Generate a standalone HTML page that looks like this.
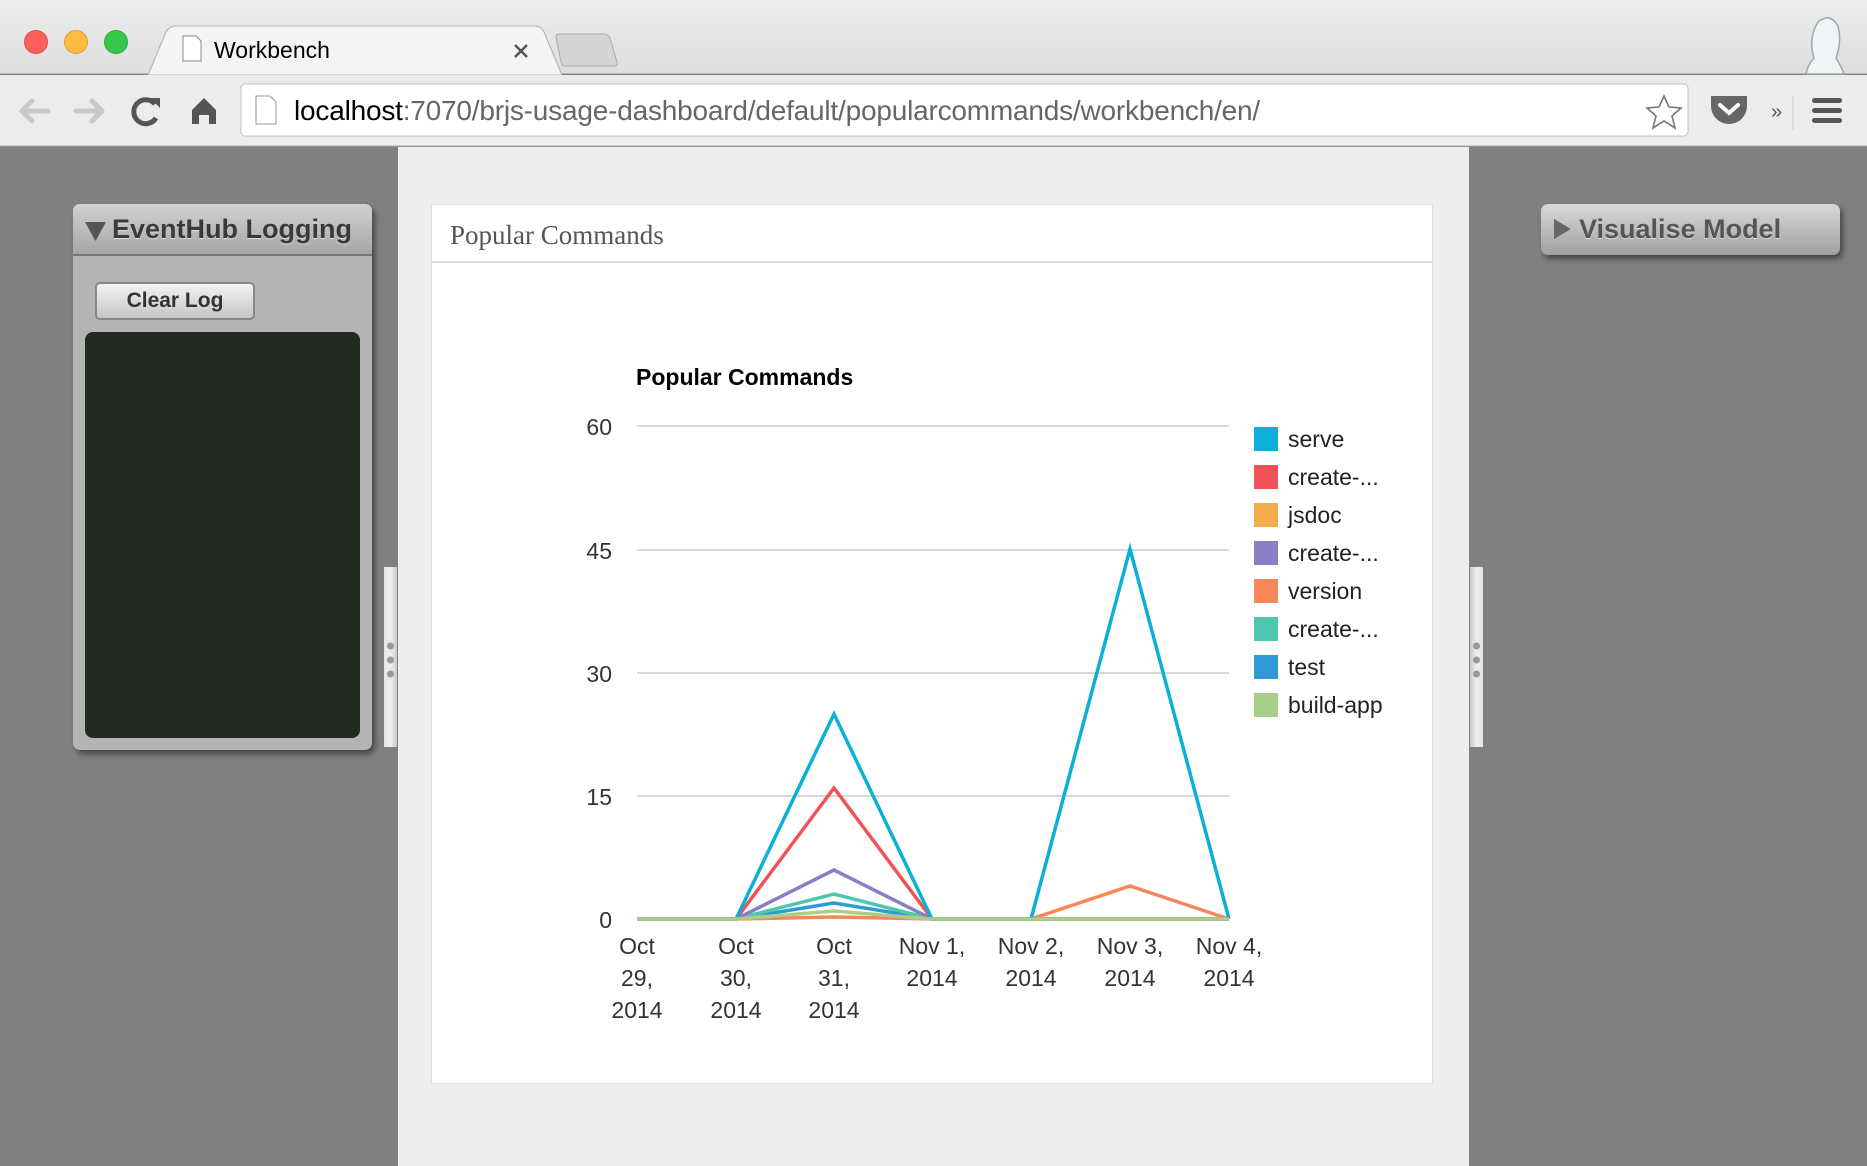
<!DOCTYPE html>
<html><head><meta charset="utf-8"><style>
*{margin:0;padding:0;box-sizing:border-box}
body{width:1867px;height:1166px;overflow:hidden;background:#808080;font-family:"Liberation Sans",sans-serif;position:relative}
.abs{position:absolute}
</style></head><body>
<div class="abs" style="left:0;top:0;width:1867px;height:74px;background:linear-gradient(#ececec,#dedede);border-bottom:1px solid #b8b8b8"></div>
<div class="abs" style="left:24px;top:30px;width:24px;height:24px;border-radius:50%;background:#fc605c;border:1px solid #de4a46"></div>
<div class="abs" style="left:64px;top:30px;width:24px;height:24px;border-radius:50%;background:#fdbc40;border:1px solid #dea034"></div>
<div class="abs" style="left:104px;top:30px;width:24px;height:24px;border-radius:50%;background:#34c84a;border:1px solid #27aa35"></div>
<svg class="abs" style="left:0;top:0" width="1867" height="148">
 <path d="M148 75 L166 32 Q169 26 176 26 L534 26 Q541 26 544 32 L562 75 Z" fill="#f4f4f4" stroke="#b0b0b0"/>
 <path d="M556 37 Q556 34 560 34 L604 34 Q608 34 610 38 L617 62 Q618 66 614 66 L566 66 Q562 66 561 62 Z" fill="#d4d4d4" stroke="#aaa"/>
 <path d="M183 36 h13 l5 5 v20 h-18 z" fill="#fff" stroke="#888"/>
 <path d="M515 45 l12 12 M527 45 l-12 12" stroke="#555" stroke-width="2.5"/>
 <rect x="0" y="75" width="1867" height="71" fill="#ececec"/>
 <line x1="0" y1="146" x2="1867" y2="146" stroke="#aaa"/>
 <path d="M22 111 h26 M22 111 l10 -10 M22 111 l10 10" stroke="#c8c8c8" stroke-width="5" fill="none" stroke-linecap="round"/>
 <path d="M102 111 h-26 M102 111 l-10 -10 M102 111 l-10 10" stroke="#c8c8c8" stroke-width="5" fill="none" stroke-linecap="round"/>
 <path d="M155 104 A12 12 0 1 0 156 118" stroke="#555" stroke-width="5" fill="none"/>
 <path d="M150 98 l10 0 l0 10 z" fill="#555"/>
 <path d="M192 110 l12 -12 l12 12 v14 h-7 v-9 h-10 v9 h-7 z" fill="#555"/>
 <rect x="241" y="84" width="1447" height="52" rx="4" fill="#fff" stroke="#c0c0c0"/>
 <path d="M256 96 h14 l6 6 v22 h-20 z" fill="#fff" stroke="#999"/>
 <path d="M1664 96 l5 11 12 1 -9 8 3 12 -11 -7 -11 7 3 -12 -9 -8 12 -1 z" fill="#fff" stroke="#777" stroke-width="1.6"/>
 <path d="M1711 96 h36 v10 a18 18 0 0 1 -36 0 z" fill="#666"/>
 <path d="M1720 105 l9 8 l9 -8" stroke="#fff" stroke-width="4" fill="none" stroke-linecap="round"/>
 <text x="1771" y="118" font-size="20" fill="#555" font-family="Liberation Sans">»</text>
 <line x1="1793" y1="96" x2="1793" y2="130" stroke="#ccc"/>
 <rect x="1812" y="98" width="30" height="5" rx="2.5" fill="#555"/><rect x="1812" y="108" width="30" height="5" rx="2.5" fill="#555"/><rect x="1812" y="118" width="30" height="5" rx="2.5" fill="#555"/>
 <path d="M1806 74 q2 -10 8 -16 q-6 -20 4 -36 q12 -10 20 4 q4 16 -2 32 q5 8 8 16 z" fill="#f0f4f8" stroke="#9aa" stroke-width="1.5"/>
</svg>
<div class="abs" style="left:214px;top:37px;font-size:23px;color:#000">Workbench</div>
<div class="abs" style="left:294px;top:95px;font-size:28px;color:#666;white-space:nowrap;letter-spacing:-0.2px"><span style="color:#000">localhost</span>:7070/brjs-usage-dashboard/default/popularcommands/workbench/en/</div>

<div class="abs" style="left:398px;top:147px;width:1071px;height:1019px;background:#eeeeee"></div>
<div class="abs" style="left:384px;top:567px;width:13px;height:180px;background:linear-gradient(90deg,#e4e4e4,#f0f0f0,#c8c8c8)"></div>
<div class="abs" style="left:1470px;top:567px;width:13px;height:180px;background:linear-gradient(90deg,#c8c8c8,#f0f0f0,#e4e4e4)"></div>
<svg class="abs" style="left:384px;top:640px" width="13" height="40"><circle cx="6.5" cy="6" r="3.5" fill="#999"/><circle cx="6.5" cy="20" r="3.5" fill="#999"/><circle cx="6.5" cy="34" r="3.5" fill="#999"/></svg>
<svg class="abs" style="left:1470px;top:640px" width="13" height="40"><circle cx="6.5" cy="6" r="3.5" fill="#999"/><circle cx="6.5" cy="20" r="3.5" fill="#999"/><circle cx="6.5" cy="34" r="3.5" fill="#999"/></svg>

<div class="abs" style="left:73px;top:204px;width:299px;height:546px;background:#b4b4b4;border-radius:7px;box-shadow:3px 4px 6px rgba(0,0,0,.45)"></div>
<div class="abs" style="left:73px;top:204px;width:299px;height:52px;background:linear-gradient(#d2d2d2,#a6a6a6);border-radius:7px 7px 0 0;border-bottom:2px solid #777"></div>
<svg class="abs" style="left:85px;top:220px" width="22" height="22"><path d="M0 2 h21 l-10.5 19 z" fill="#555"/></svg>
<div class="abs" style="left:112px;top:214px;font-size:27px;font-weight:bold;color:#3a3a3a;text-shadow:0 1px 0 #ddd;white-space:nowrap">EventHub Logging</div>
<div class="abs" style="left:95px;top:282px;width:160px;height:38px;border:2px solid #888;border-radius:5px;background:linear-gradient(#f2f2f2,#c6c6c6);font-size:21px;font-weight:bold;color:#333;text-align:center;line-height:34px">Clear Log</div>
<div class="abs" style="left:85px;top:332px;width:275px;height:406px;background:#232a22;border-radius:8px"></div>

<div class="abs" style="left:1541px;top:204px;width:299px;height:51px;background:linear-gradient(#d8d8d8,#a0a0a0);border-radius:7px;box-shadow:3px 4px 6px rgba(0,0,0,.45)"></div>
<svg class="abs" style="left:1553px;top:218px" width="20" height="22"><path d="M1 1 v20 l17 -10 z" fill="#666"/></svg>
<div class="abs" style="left:1579px;top:204px;font-size:27px;font-weight:bold;color:#555;line-height:51px;white-space:nowrap;text-shadow:0 1px 0 #ddd">Visualise Model</div>

<div class="abs" style="left:431px;top:204px;width:1002px;height:880px;background:#fff;border:1px solid #ddd"></div>
<div class="abs" style="left:432px;top:261px;width:1000px;height:2px;background:#ddd"></div>
<div class="abs" style="left:450px;top:220px;font-family:'Liberation Serif',serif;font-size:27px;color:#555">Popular Commands</div>

<svg class="abs" style="left:0;top:0" width="1867" height="1166" font-family="Liberation Sans">
 <text x="636" y="385" font-size="23" font-weight="bold" fill="#000">Popular Commands</text>
 <g stroke="#ccc" stroke-width="1.5">
  <line x1="637" y1="426" x2="1229" y2="426"/><line x1="637" y1="550" x2="1229" y2="550"/><line x1="637" y1="673" x2="1229" y2="673"/><line x1="637" y1="796" x2="1229" y2="796"/>
 </g>
 <g font-size="23" fill="#333" text-anchor="end">
  <text x="612" y="435">60</text><text x="612" y="559">45</text><text x="612" y="682">30</text><text x="612" y="805">15</text><text x="612" y="928">0</text>
 </g>
 <g fill="none" stroke-width="3.5" stroke-linejoin="miter">
  <polyline points="637,919 736,919 834,903 932,919 1031,919 1130,919 1229,919" stroke="#2f9ad6"/>
  <polyline points="637,919 736,919 834,894 932,919 1031,919 1130,919 1229,919" stroke="#4ec7b0"/>
  <polyline points="637,919 736,919 834,870 932,919 1031,919 1130,919 1229,919" stroke="#8a7fc7"/>
  <polyline points="637,919 736,919 834,788 932,919 1031,919 1130,919 1229,919" stroke="#ef5358"/>
  <polyline points="637,919 736,919 834,917 932,919 1031,919 1130,886 1229,919" stroke="#f7875a"/>
  <polyline points="637,919 736,919 834,714 932,919 1031,919 1130,549 1229,919" stroke="#0bb0d8"/>
  <polyline points="637,919 736,919 834,911 932,919 1031,919 1130,919 1229,919" stroke="#a8cf88"/>
 </g>
 <g font-size="23" fill="#333" text-anchor="middle">
  <text x="637" y="954">Oct</text><text x="637" y="986">29,</text><text x="637" y="1018">2014</text>
  <text x="736" y="954">Oct</text><text x="736" y="986">30,</text><text x="736" y="1018">2014</text>
  <text x="834" y="954">Oct</text><text x="834" y="986">31,</text><text x="834" y="1018">2014</text>
  <text x="932" y="954">Nov 1,</text><text x="932" y="986">2014</text>
  <text x="1031" y="954">Nov 2,</text><text x="1031" y="986">2014</text>
  <text x="1130" y="954">Nov 3,</text><text x="1130" y="986">2014</text>
  <text x="1229" y="954">Nov 4,</text><text x="1229" y="986">2014</text>
 </g>
 <g font-size="23" fill="#222">
  <rect x="1254" y="427" width="24" height="24" fill="#0bb0d8"/><text x="1288" y="447">serve</text>
  <rect x="1254" y="465" width="24" height="24" fill="#ef5358"/><text x="1288" y="485">create-...</text>
  <rect x="1254" y="503" width="24" height="24" fill="#f2ac4a"/><text x="1288" y="523">jsdoc</text>
  <rect x="1254" y="541" width="24" height="24" fill="#8a7fc7"/><text x="1288" y="561">create-...</text>
  <rect x="1254" y="579" width="24" height="24" fill="#f7875a"/><text x="1288" y="599">version</text>
  <rect x="1254" y="617" width="24" height="24" fill="#4ec7b0"/><text x="1288" y="637">create-...</text>
  <rect x="1254" y="655" width="24" height="24" fill="#2f9ad6"/><text x="1288" y="675">test</text>
  <rect x="1254" y="693" width="24" height="24" fill="#a8cf88"/><text x="1288" y="713">build-app</text>
 </g>
</svg>
</body></html>
